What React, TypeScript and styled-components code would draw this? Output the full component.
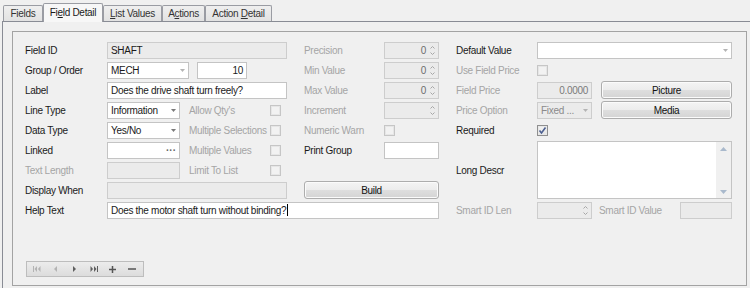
import { FC, ReactNode } from "react";
import styled, { createGlobalStyle, css } from "styled-components";

const GlobalStyle = createGlobalStyle`
  html, body {
    margin: 0;
    padding: 0;
    background: #f0f0f0;
    overflow: hidden;
  }
  body {
    font-family: "Liberation Sans", Arial, sans-serif;
    font-size: 10px;
    letter-spacing: -0.3px;
    color: #1a1a1a;
  }
`;

interface Place {
  $c: string;
  $r: string;
}

const place = css<Place>`
  grid-column: ${p => p.$c};
  grid-row: ${p => p.$r};
`;

const Window = styled.div`
  width: 750px;
  height: 288px;
  padding: 3px 0 0 2px;
  box-sizing: border-box;
  overflow: hidden;
`;

const TabStrip = styled.div`
  display: flex;
  align-items: flex-end;
  height: 18px;
  padding-left: 1px;
`;

const Tab = styled.div<{ $active?: boolean; $w: number }>`
  width: ${p => p.$w}px;
  box-sizing: border-box;
  display: flex;
  align-items: center;
  justify-content: center;
  border: 1px solid #9a9ca3;
  border-bottom: none;
  border-radius: 2px 2px 0 0;
  white-space: nowrap;
  ${p => p.$active
    ? css`
      height: 19px;
      margin-bottom: -1px;
      background: #f7f7f7;
      position: relative;
      z-index: 1;
      padding-bottom: 2px;
    `
    : css`
      height: 16px;
      background: linear-gradient(#efefef, #e2e2e2);
      color: #333;
    `}
`;

const Page = styled.div`
  width: 748px;
  height: 267px;
  box-sizing: border-box;
  border-top: 1px solid #898c95;
  border-left: 1px solid #898c95;
  padding: 9px 0 0 9px;
`;

const Frame = styled.div`
  width: 735px;
  height: 255px;
  box-sizing: border-box;
  border: 1px solid #a3a3a3;
  padding: 8px 0 0 12px;
`;

const FormGrid = styled.div`
  display: grid;
  grid-template-columns: 82px 73px 9px 8px 50px 23px 17px 17px 80px 55px 17px 81px 55px 7px 2px 79px 52px;
  grid-template-rows: repeat(9, 20px);
`;

const Label = styled.span<Place & { $off?: boolean }>`
  ${place};
  align-self: center;
  white-space: nowrap;
  color: ${p => (p.$off ? "#a5a5a5" : "#1a1a1a")};
`;

const Box = styled.div<Place & { $off?: boolean; $right?: boolean }>`
  ${place};
  align-self: center;
  height: 17px;
  box-sizing: border-box;
  display: flex;
  align-items: center;
  justify-content: ${p => (p.$right ? "flex-end" : "flex-start")};
  padding: 0 3px;
  background: ${p => (p.$off ? "#ebebeb" : "#ffffff")};
  border: 1px solid ${p => (p.$off ? "#cdcdcd" : "#c4c4c4")};
  white-space: nowrap;
  overflow: hidden;
`;

const Caret = styled.span`
  display: inline-block;
  width: 1px;
  height: 12px;
  background: #000;
  margin-left: 1px;
`;

const Drop = styled.svg`
  margin-left: auto;
  flex: none;
`;

const Dots = styled.span`
  margin-left: auto;
  color: #666;
  letter-spacing: 0;
  font-size: 10px;
  font-weight: bold;
`;

const SpinValue = styled.span<{ $off?: boolean }>`
  flex: 1;
  text-align: right;
  padding-right: 4px;
  color: ${p => (p.$off ? "#6d6d6d" : "#1a1a1a")};
`;

const Check = styled.span<Place & { $on?: boolean }>`
  ${place};
  align-self: center;
  width: 11px;
  height: 11px;
  box-sizing: border-box;
  border: 1px solid ${p => (p.$on ? "#8f8f8f" : "#c6c6c6")};
  background: ${p => (p.$on ? "linear-gradient(#f4f4f4, #e4e4e4)" : "#f2f2f2")};
  box-shadow: inset 0 0 0 1px ${p => (p.$on ? "#e8e8e8" : "#e6e6e6")};
  display: flex;
  align-items: center;
  justify-content: center;
`;

const Button = styled.div<Place>`
  ${place};
  align-self: center;
  height: 18px;
  box-sizing: border-box;
  border: 1px solid #adadad;
  border-radius: 3px;
  background: linear-gradient(#f4f4f4 0%, #ececec 50%, #dedede 51%, #d4d4d4 100%);
  box-shadow: inset 0 0 0 1px #fbfbfb;
  display: flex;
  align-items: center;
  justify-content: center;
  color: #111;
`;

const Memo = styled.div<Place>`
  ${place};
  align-self: start;
  margin-top: 1px;
  height: 58px;
  box-sizing: border-box;
  border: 1px solid #c4c4c4;
  background: #fff;
  display: flex;
  justify-content: flex-end;
`;

const ScrollBar = styled.div`
  width: 15px;
  background: #f0f0f0;
  display: flex;
  flex-direction: column;
  justify-content: space-between;
  align-items: center;
  padding: 5px 0 4px;
`;

const Navigator = styled.div`
  margin: 41px 0 0 1px;
  width: 118px;
  height: 16px;
  box-sizing: border-box;
  border: 1px solid #bdbdbd;
  background: linear-gradient(#ececec, #dcdcdc);
  display: flex;
  align-items: center;
`;

const NavSlot = styled.span`
  width: 19px;
  display: flex;
  justify-content: center;
  align-items: center;
`;

interface FieldProps {
  c: string;
  r: string;
  off?: boolean;
  dim?: boolean;
  children?: ReactNode;
}

const Combo: FC<FieldProps> = ({ c, r, off, dim, children }) => (
  <Box $c={c} $r={r} $off={off}>
    <span style={{ color: off ? "#8a8a8a" : undefined }}>{children}</span>
    <Drop width="5" height="3" viewBox="0 0 5 3">
      <polygon points="0,0 5,0 2.5,3" fill={off || dim ? "#b4b4b4" : "#7a7a7a"} />
    </Drop>
  </Box>
);

const Spin: FC<FieldProps> = ({ c, r, off, children }) => (
  <Box $c={c} $r={r} $off={off}>
    <SpinValue $off={off}>{children}</SpinValue>
    <svg width="5" height="11" viewBox="0 0 5 11">
      <polyline points="0.5,3.5 2.5,1.5 4.5,3.5" fill="none" stroke="#a6a6a6" strokeWidth="1" />
      <polyline points="0.5,7.5 2.5,9.5 4.5,7.5" fill="none" stroke="#a6a6a6" strokeWidth="1" />
    </svg>
  </Box>
);

const Tick: FC = () => (
  <svg width="9" height="9" viewBox="0 0 9 9">
    <path d="M1.5 4.5 L3.5 7 L7.5 1.5" fill="none" stroke="#4c5f90" strokeWidth="1.6" />
  </svg>
);

const tabs = [
  { key: "fields", w: 40, label: <span>Fields</span> },
  { key: "detail", w: 60, label: <span>Fi<u>e</u>ld Detail</span>, active: true },
  { key: "list", w: 59, label: <span><u>L</u>ist Values</span> },
  { key: "actions", w: 43, label: <span>A<u>c</u>tions</span> },
  { key: "adetail", w: 67, label: <span>Action <u>D</u>etail</span> },
];

const App: FC = () => (
  <>
    <GlobalStyle />
    <Window>
      <TabStrip>
        {tabs.map(t => (
          <Tab key={t.key} $w={t.w} $active={t.active}>{t.label}</Tab>
        ))}
      </TabStrip>
      <Page>
        <Frame>
          <FormGrid>
            {/* row 1 */}
            <Label $c="1 / 2" $r="1">Field ID</Label>
            <Box $c="2 / 8" $r="1" $off>SHAFT</Box>
            <Label $c="9 / 10" $r="1" $off>Precision</Label>
            <Spin c="10 / 11" r="1" off>0</Spin>
            <Label $c="12 / 13" $r="1">Default Value</Label>
            <Combo c="13 / 18" r="1" dim />

            {/* row 2 */}
            <Label $c="1 / 2" $r="2">Group / Order</Label>
            <Combo c="2 / 4" r="2" dim>MECH</Combo>
            <Box $c="5 / 6" $r="2" $right>10</Box>
            <Label $c="9 / 10" $r="2" $off>Min Value</Label>
            <Spin c="10 / 11" r="2" off>0</Spin>
            <Label $c="12 / 13" $r="2" $off>Use Field Price</Label>
            <Check $c="13 / 14" $r="2" />

            {/* row 3 */}
            <Label $c="1 / 2" $r="3">Label</Label>
            <Box $c="2 / 8" $r="3">Does the drive shaft turn freely?</Box>
            <Label $c="9 / 10" $r="3" $off>Max Value</Label>
            <Spin c="10 / 11" r="3" off>0</Spin>
            <Label $c="12 / 13" $r="3" $off>Field Price</Label>
            <Box $c="13 / 14" $r="3" $off $right><span style={{ color: "#7a7a7a" }}>0.0000</span></Box>
            <Button $c="16 / 18" $r="3">Picture</Button>

            {/* row 4 */}
            <Label $c="1 / 2" $r="4">Line Type</Label>
            <Combo c="2 / 3" r="4">Information</Combo>
            <Label $c="4 / 7" $r="4" $off>Allow Qty's</Label>
            <Check $c="7 / 8" $r="4" />
            <Label $c="9 / 10" $r="4" $off>Increment</Label>
            <Spin c="10 / 11" r="4" off />
            <Label $c="12 / 13" $r="4" $off>Price Option</Label>
            <Combo c="13 / 14" r="4" off>Fixed ...</Combo>
            <Button $c="16 / 18" $r="4">Media</Button>

            {/* row 5 */}
            <Label $c="1 / 2" $r="5">Data Type</Label>
            <Combo c="2 / 3" r="5">Yes/No</Combo>
            <Label $c="4 / 7" $r="5" $off>Multiple Selections</Label>
            <Check $c="7 / 8" $r="5" />
            <Label $c="9 / 10" $r="5" $off>Numeric Warn</Label>
            <Check $c="10 / 11" $r="5" />
            <Label $c="12 / 13" $r="5">Required</Label>
            <Check $c="13 / 14" $r="5" $on><Tick /></Check>

            {/* row 6 */}
            <Label $c="1 / 2" $r="6">Linked</Label>
            <Box $c="2 / 3" $r="6"><Dots>···</Dots></Box>
            <Label $c="4 / 7" $r="6" $off>Multiple Values</Label>
            <Check $c="7 / 8" $r="6" />
            <Label $c="9 / 10" $r="6">Print Group</Label>
            <Box $c="10 / 11" $r="6" />
            <Label $c="12 / 13" $r="6 / 9">Long Descr</Label>
            <Memo $c="13 / 18" $r="6 / 9">
              <ScrollBar>
                <svg width="7" height="4" viewBox="0 0 7 4"><polygon points="0,4 7,4 3.5,0" fill="#a9b9cc" /></svg>
                <svg width="7" height="4" viewBox="0 0 7 4"><polygon points="0,0 7,0 3.5,4" fill="#a9b9cc" /></svg>
              </ScrollBar>
            </Memo>

            {/* row 7 */}
            <Label $c="1 / 2" $r="7" $off>Text Length</Label>
            <Box $c="2 / 3" $r="7" $off />
            <Label $c="4 / 7" $r="7" $off>Limit To List</Label>
            <Check $c="7 / 8" $r="7" />

            {/* row 8 */}
            <Label $c="1 / 2" $r="8">Display When</Label>
            <Box $c="2 / 8" $r="8" $off />
            <Button $c="9 / 11" $r="8">Build</Button>

            {/* row 9 */}
            <Label $c="1 / 2" $r="9">Help Text</Label>
            <Box $c="2 / 11" $r="9">Does the motor shaft turn without binding?<Caret /></Box>
            <Label $c="12 / 13" $r="9" $off>Smart ID Len</Label>
            <Spin c="13 / 14" r="9" off />
            <Label $c="15 / 17" $r="9" $off>Smart ID Value</Label>
            <Box $c="17 / 18" $r="9" $off />
          </FormGrid>

          <Navigator>
            <NavSlot>
              <svg width="8" height="6" viewBox="0 0 8 6">
                <rect x="0" y="0" width="1" height="6" fill="#b3b3b3" />
                <polygon points="4,0 1.5,3 4,6" fill="#b3b3b3" />
                <polygon points="7.5,0 5,3 7.5,6" fill="#b3b3b3" />
              </svg>
            </NavSlot>
            <NavSlot>
              <svg width="3" height="6" viewBox="0 0 3 6"><polygon points="3,0 0,3 3,6" fill="#b3b3b3" /></svg>
            </NavSlot>
            <NavSlot>
              <svg width="3" height="6" viewBox="0 0 3 6"><polygon points="0,0 3,3 0,6" fill="#5e5e5e" /></svg>
            </NavSlot>
            <NavSlot>
              <svg width="8" height="6" viewBox="0 0 8 6">
                <polygon points="0.5,0 3,3 0.5,6" fill="#5e5e5e" />
                <polygon points="4,0 6.5,3 4,6" fill="#5e5e5e" />
                <rect x="7" y="0" width="1" height="6" fill="#5e5e5e" />
              </svg>
            </NavSlot>
            <NavSlot>
              <svg width="7" height="7" viewBox="0 0 7 7">
                <rect x="0" y="2.75" width="7" height="1.5" fill="#555" />
                <rect x="2.75" y="0" width="1.5" height="7" fill="#555" />
              </svg>
            </NavSlot>
            <NavSlot>
              <svg width="8" height="2" viewBox="0 0 8 2"><rect x="0" y="0.25" width="8" height="1.5" fill="#555" /></svg>
            </NavSlot>
          </Navigator>
        </Frame>
      </Page>
    </Window>
  </>
);

export default App;
